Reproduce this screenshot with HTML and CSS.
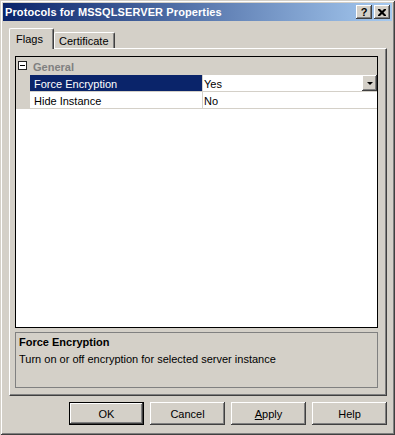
FILE: index.html
```html
<!DOCTYPE html>
<html lang="en">
<head>
    <meta charset="UTF-8">
    <title>Protocols for MSSQLSERVER Properties</title>
    <link rel="stylesheet" href="styles.css">
</head>
<body>
    <div class="window">
        <!-- Title bar -->
        <div class="titlebar">
            <span class="title">Protocols for MSSQLSERVER Properties</span>
            <div class="caption-buttons">
                <div class="cap-btn help-cap">?</div>
                <div class="cap-btn">
                    <svg width="8" height="7" viewBox="0 0 8 7">
                        <path d="M0 0h2l2 2 2-2h2v1l-2.5 2.5 2.5 2.5v1h-2l-2-2-2 2h-2v-1l2.5-2.5-2.5-2.5z" fill="#000"/>
                    </svg>
                </div>
            </div>
        </div>

        <div class="content">
            <!-- Tabs -->
            <div class="tabs">
                <div class="tab active">Flags</div>
                <div class="tab">Certificate</div>
            </div>

            <div class="panel">
                <!-- Property grid -->
                <div class="grid">
                    <div class="row category">
                        <div class="margin"><span class="expander"></span></div>
                        <div class="cat-name">General</div>
                    </div>
                    <div class="row selected">
                        <div class="margin"></div>
                        <div class="name">Force Encryption</div>
                        <div class="value">Yes<span class="dropdown"><span class="arrow"></span></span></div>
                    </div>
                    <div class="row">
                        <div class="margin"></div>
                        <div class="name">Hide Instance</div>
                        <div class="value">No</div>
                    </div>
                </div>

                <!-- Help pane -->
                <div class="help">
                    <div class="help-title">Force Encryption</div>
                    <div class="help-text">Turn on or off encryption for selected server instance</div>
                </div>
            </div>

            <div class="buttons">
                <button class="btn default">OK</button>
                <button class="btn">Cancel</button>
                <button class="btn"><u>A</u>pply</button>
                <button class="btn">Help</button>
            </div>
        </div>
    </div>
</body>
</html>
```

FILE: styles.css
```css
body {
    margin: 0;
    background: #d4d0c8;
}

.window {
    width: 395px;
    height: 435px;
    box-sizing: border-box;
    padding: 3px;
    background: #d4d0c8;
    box-shadow: inset 1px 1px #d4d0c8, inset -1px -1px #404040, inset 2px 2px #fff, inset -2px -2px #808080;
    display: flex;
    flex-direction: column;
    font-family: "Liberation Sans", Arial, sans-serif;
    font-size: 11px;
    color: #000;
}

/* title bar */
.titlebar {
    height: 18px;
    display: flex;
    align-items: center;
    justify-content: space-between;
    padding: 0 2px;
    background: linear-gradient(to right, #0a246a, #a6caf0);
}

.title {
    color: #fff;
    font-weight: bold;
    font-size: 11px;
    letter-spacing: 0.1px;
}

.caption-buttons {
    display: flex;
    gap: 2px;
}

.cap-btn {
    width: 16px;
    height: 14px;
    background: #d4d0c8;
    box-shadow: inset -1px -1px #404040, inset 1px 1px #fff, inset -2px -2px #808080;
    display: flex;
    align-items: center;
    justify-content: center;
}

.help-cap {
    font-weight: bold;
    font-size: 11px;
    line-height: 14px;
}

/* body */
.content {
    flex: 1;
    padding: 7px 5px 0 6px;
    display: flex;
    flex-direction: column;
}

.tabs {
    display: flex;
    align-items: flex-end;
    height: 20px;
}

.tab {
    box-sizing: border-box;
    height: 16px;
    width: 61px;
    padding: 2px 0 0 4px;
    background: #d4d0c8;
    border-top: 1px solid #fff;
    border-left: 1px solid #fff;
    border-right: 1px solid #404040;
    border-radius: 2px 2px 0 0;
    box-shadow: inset -1px 0 #808080;
}

.tab.active {
    width: 45px;
    height: 21px;
    margin-bottom: -1px;
    padding: 4px 0 0 6px;
    position: relative;
    z-index: 1;
}

.panel {
    width: 378px;
    height: 348px;
    box-sizing: border-box;
    padding: 7px 7px 7px 5px;
    border-top: 1px solid #fff;
    border-left: 1px solid #fff;
    border-right: 1px solid #404040;
    border-bottom: 1px solid #404040;
    box-shadow: inset -1px -1px #808080;
    display: flex;
    flex-direction: column;
}

/* property grid */
.grid {
    width: 363px;
    height: 272px;
    box-sizing: border-box;
    border: 1px solid #000;
    background: #fff;
}

.row {
    display: flex;
    height: 17px;
    box-sizing: border-box;
    line-height: 16px;
}

.row.category {
    height: 18px;
    background: #d4d0c8;
}

.margin {
    width: 14px;
    flex: none;
    background: #d4d0c8;
    position: relative;
}

.expander {
    position: absolute;
    left: 2px;
    top: 4px;
    width: 9px;
    height: 9px;
    box-sizing: border-box;
    border: 1px solid #222;
    background: #fff;
}

.expander::after {
    content: "";
    position: absolute;
    left: 1px;
    top: 3px;
    width: 5px;
    height: 1px;
    background: #000;
}

.cat-name {
    padding: 2px 0 0 3px;
    font-weight: bold;
    color: #808080;
}

.name {
    width: 173px;
    flex: none;
    box-sizing: border-box;
    padding: 1px 0 0 4px;
    border-bottom: 1px solid #d4d0c8;
    border-right: 1px solid #d4d0c8;
}

.value {
    flex: 1;
    padding: 1px 0 0 1px;
    border-bottom: 1px solid #d4d0c8;
    position: relative;
}

.selected .name {
    background: #0a246a;
    color: #fff;
}

.dropdown {
    position: absolute;
    right: 0;
    top: 0;
    width: 15px;
    height: 16px;
    background: #d4d0c8;
    box-shadow: inset -1px -1px #404040, inset 1px 1px #fff, inset -2px -2px #808080;
}

.arrow {
    position: absolute;
    left: 5px;
    top: 7px;
    border-left: 3px solid transparent;
    border-right: 3px solid transparent;
    border-top: 3px solid #000;
}

/* help pane */
.help {
    margin-top: 4px;
    width: 363px;
    height: 56px;
    box-sizing: border-box;
    border: 1px solid #808080;
    padding: 1px 3px;
}

.help-title {
    font-weight: bold;
    line-height: 17px;
}

.help-text {
    line-height: 17px;
}

/* dialog buttons */
.buttons {
    width: 378px;
    margin-top: 6px;
    display: flex;
    justify-content: flex-end;
    gap: 6px;
}

.btn {
    width: 75px;
    height: 23px;
    padding: 0;
    border: none;
    background: #d4d0c8;
    font-family: "Liberation Sans", Arial, sans-serif;
    font-size: 11px;
    color: #000;
    box-shadow: inset -1px -1px #404040, inset 1px 1px #fff, inset -2px -2px #808080;
}

.btn.default {
    border: 1px solid #000;
}
```
